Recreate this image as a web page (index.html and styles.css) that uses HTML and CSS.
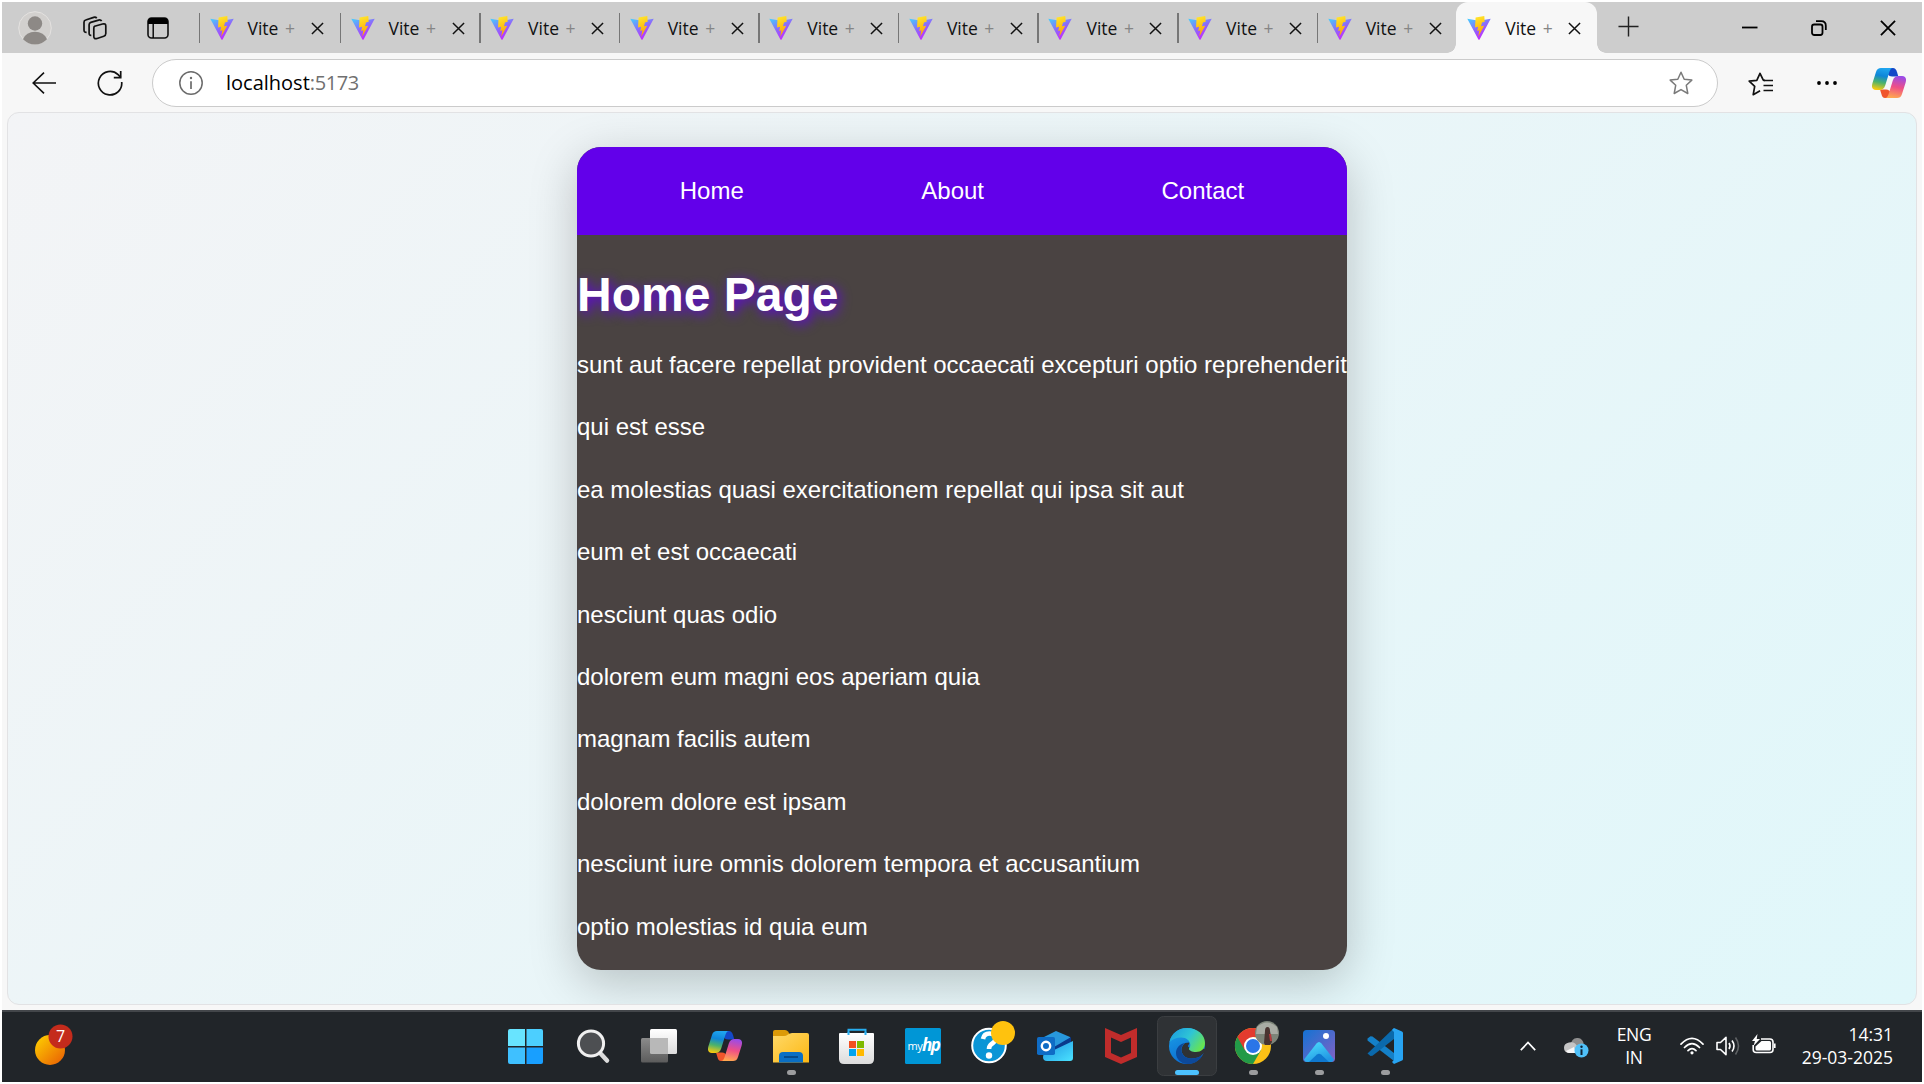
FILE: index.html
```html
<!DOCTYPE html>
<html lang="en">
<head>
<meta charset="utf-8">
<title>Vite + React</title>
<link rel="stylesheet" href="styles.css">
</head>
<body>
<svg class="defs" width="0" height="0" aria-hidden="true">
  <defs>
    <linearGradient id="vA" x1="0" y1="0" x2="0.6" y2="1"><stop offset="0" stop-color="#41d1ff"/><stop offset=".55" stop-color="#8f66fb"/><stop offset="1" stop-color="#c824ff"/></linearGradient>
    <linearGradient id="vB" x1="0.4" y1="0" x2="0.6" y2="1"><stop offset="0" stop-color="#ffe52b"/><stop offset="1" stop-color="#ff9d00"/></linearGradient>
    <linearGradient id="cpA" x1="0.5" y1="0" x2="0.3" y2="1"><stop offset="0" stop-color="#1fa5ef"/><stop offset=".35" stop-color="#0f86d8"/><stop offset=".65" stop-color="#4bb26c"/><stop offset="1" stop-color="#fdcb0c"/></linearGradient>
    <linearGradient id="cpB" x1="0.6" y1="0" x2="0.4" y2="1"><stop offset="0" stop-color="#9a4be8"/><stop offset=".5" stop-color="#ef4f86"/><stop offset="1" stop-color="#ffa850"/></linearGradient>
    <linearGradient id="fold" x1="0" y1="0" x2="1" y2="1"><stop offset="0" stop-color="#ffd968"/><stop offset="1" stop-color="#fdb813"/></linearGradient>
    <linearGradient id="silver" x1="0" y1="0" x2="0" y2="1"><stop offset="0" stop-color="#fff"/><stop offset="1" stop-color="#dcdcdc"/></linearGradient>
    <linearGradient id="gray" x1="0" y1="0" x2="0" y2="1"><stop offset="0" stop-color="#8b8b8b"/><stop offset="1" stop-color="#5c5c5c"/></linearGradient>
    <linearGradient id="sun" x1="0" y1="0" x2="1" y2="1"><stop offset="0" stop-color="#ffd500"/><stop offset="1" stop-color="#e85a04"/></linearGradient>
    <linearGradient id="edgeTop" x1="0" y1="0.2" x2="1" y2="0.7"><stop offset="0" stop-color="#1c9de0"/><stop offset=".5" stop-color="#2fc5d5"/><stop offset="1" stop-color="#6be648"/></linearGradient>
    <linearGradient id="edgeLeft" x1="0" y1="0" x2="0.5" y2="1"><stop offset="0" stop-color="#1ca1e8"/><stop offset="1" stop-color="#0a6ad0"/></linearGradient>
    <linearGradient id="photo" x1="0" y1="0" x2="1" y2="1"><stop offset="0" stop-color="#1373d3"/><stop offset="1" stop-color="#8561c5"/></linearGradient>
    <linearGradient id="mount" x1="0" y1="0" x2="0.6" y2="1"><stop offset="0" stop-color="#4fe2ff"/><stop offset="1" stop-color="#2196e3"/></linearGradient>
    <linearGradient id="outl" x1="0" y1="0" x2="1" y2="1"><stop offset="0" stop-color="#1c8fe0"/><stop offset="1" stop-color="#4be3ff"/></linearGradient>
    <symbol id="vite" viewBox="0 0 24 24"><path fill="url(#vA)" d="M.3 2.800 12 4.800l11.700-2L12.600 23.400c-.3.5-.9.5-1.200 0z"/><path fill="url(#vB)" d="M17.300.1 8.600 1.500 8 11.400l3.100-.7-.9 4.200 2.200-.6-1.200 6.400 6-11-3.200.6 1-3.900 2.700-.7z"/></symbol>
    <symbol id="x" viewBox="0 0 14 14"><path d="M1 1l12 12M13 1L1 13" fill="none" stroke="#111" stroke-width="1.600"/></symbol>
    <symbol id="copilot" viewBox="0 0 34 30">
      <path fill="#1448c8" d="M17 0h4c2 0 3 1.500 4 4l1.300 4.500h-6c-2.500 0-4-1-5.300-4z"/>
      <path fill="#f0562c" d="M17 30h-4c-2 0-3-1.500-3.600-4L8 21.500h6c2.500 0 4 1 4.500 4z"/>
      <path fill="url(#cpA)" d="M9 0h12c-2 0-3 2-3.800 4.500l-4 13C12 21 10 22 7.500 22H4c-4 0-4.700-3-3.500-7L4 4c1-3 2.500-4 5-4z"/>
      <path fill="url(#cpB)" d="M25 30H13c2 0 3-2 3.800-4.500l4-13C22 9 24 8 26.500 8H30c4 0 4.700 3 3.500 7L30 26c-1 3-2.500 4-5 4z"/>
    </symbol>
  </defs>
</svg>

<div class="screen">
  <header class="tabbar">
    <svg class="avatar" viewBox="0 0 34 34"><circle cx="17" cy="17" r="16.300" fill="#d2d0ce" stroke="#e4e2e0"/><circle cx="17" cy="12.500" r="7.200" fill="#8d8986"/><path d="M5 28.300a12.500 10.500 0 0 1 24 0 16.300 16.300 0 0 1-24 0z" fill="#8d8986"/></svg>
    <svg class="workspaces" viewBox="0 0 26 26" fill="none" stroke="#111" stroke-width="1.700"><path d="M12.600 11.300 20.500 9q3.300-.8 3.300 2v7.600q0 2-2 2.700l-6.700 2.200q-3.300.8-3.300-2v-8q0-1.700.8-2.200z"/><path d="M9.300 20.400q-2.200.2-2.200-2.200V9.700q0-1.700 1.700-2.300l7.800-2.300q2.200-.5 3 1.100"/><path d="M4.600 17.300Q2 17.400 2 15V7.300Q2 5.500 3.700 5l8-2.600q2-.6 3 .9"/></svg>
    <svg class="vtabs" viewBox="0 0 22 22"><rect x="1" y="1" width="20" height="20" rx="3.500" fill="none" stroke="#111" stroke-width="1.600"/><path d="M1 7V4.500Q1 1 4.500 1h13Q21 1 21 4.500V7zM5.500 7h1.400v14H5.500z" fill="#000"/></svg>
    <nav class="tabs">
      <div class="tab first"><svg class="fav"><use href="#vite"/></svg><span>Vite <i>+</i></span><svg class="close"><use href="#x"/></svg></div>
      <div class="tab"><svg class="fav"><use href="#vite"/></svg><span>Vite <i>+</i></span><svg class="close"><use href="#x"/></svg></div>
      <div class="tab"><svg class="fav"><use href="#vite"/></svg><span>Vite <i>+</i></span><svg class="close"><use href="#x"/></svg></div>
      <div class="tab"><svg class="fav"><use href="#vite"/></svg><span>Vite <i>+</i></span><svg class="close"><use href="#x"/></svg></div>
      <div class="tab"><svg class="fav"><use href="#vite"/></svg><span>Vite <i>+</i></span><svg class="close"><use href="#x"/></svg></div>
      <div class="tab"><svg class="fav"><use href="#vite"/></svg><span>Vite <i>+</i></span><svg class="close"><use href="#x"/></svg></div>
      <div class="tab"><svg class="fav"><use href="#vite"/></svg><span>Vite <i>+</i></span><svg class="close"><use href="#x"/></svg></div>
      <div class="tab"><svg class="fav"><use href="#vite"/></svg><span>Vite <i>+</i></span><svg class="close"><use href="#x"/></svg></div>
      <div class="tab"><svg class="fav"><use href="#vite"/></svg><span>Vite <i>+</i></span><svg class="close"><use href="#x"/></svg></div>
      <div class="tab active"><svg class="fav"><use href="#vite"/></svg><span>Vite <i>+</i></span><svg class="close"><use href="#x"/></svg></div>
    </nav>
    <svg class="newtab" viewBox="0 0 22 22"><path d="M11 .5v21M.5 11h21" stroke="#222" stroke-width="1.500"/></svg>
    <div class="controls">
      <svg width="16" height="16" viewBox="0 0 16 16"><path d="M0 7.500h15.500" stroke="#000" stroke-width="1.800"/></svg>
      <svg width="16" height="16" viewBox="0 0 16 16" fill="none" stroke="#000" stroke-width="1.800"><rect x="1" y="4.500" width="10.500" height="10.500" rx="2.200"/><path d="M5 1.200h5.200q4.600 0 4.600 4.600V10"/></svg>
      <svg width="16" height="16" viewBox="0 0 17 17"><path d="M1 1l15 15M16 1L1 16" stroke="#000" stroke-width="1.900"/></svg>
    </div>
  </header>

  <div class="toolbar">
    <svg class="back" viewBox="0 0 24 22" fill="none" stroke="#111" stroke-width="1.600"><path d="M24 11H1.200M12 .7 1.200 11 12 21.300"/></svg>
    <svg class="reload" viewBox="0 0 26 26" fill="none" stroke="#111" stroke-width="1.700"><path d="M24.700 12a11.700 11.700 0 1 1-3.600-7.300l2.600 2.700"/><path d="M23.700 1v6.700h-6.900"/></svg>
    <div class="omnibox">
      <svg class="info" viewBox="0 0 24 24"><circle cx="12" cy="12" r="11.200" fill="none" stroke="#6b6b6b" stroke-width="1.500"/><path d="M12 10.300V18" stroke="#6b6b6b" stroke-width="1.700"/><circle cx="12" cy="7" r="1.200" fill="#6b6b6b"/></svg>
      <span class="url">localhost<b>:5173</b></span>
      <svg class="star" viewBox="0 0 24 24" fill="none" stroke="#7a7a7a" stroke-width="1.500" stroke-linejoin="round"><path d="M12 1.200l3.200 7 7.600.9-5.500 5.200 1.500 8.200-6.800-3.900-6.800 3.900 1.500-8.200L1.200 9.100l7.600-.9z"/></svg>
    </div>
    <svg class="favs" viewBox="0 0 25 24" fill="none" stroke="#111" stroke-width="1.700" stroke-linejoin="round"><path d="M17 8.400l-1.700-.2L12 1.300l-3.200 7-7.600.9 5.500 5.200-1.500 8.300 6.900-4"/><path d="M15.500 8.500H25M15.500 13.500H25M15.500 18.500H25"/></svg>
    <svg class="dots" viewBox="0 0 20 6"><circle cx="2" cy="3" r="1.900"/><circle cx="10" cy="3" r="1.900"/><circle cx="18" cy="3" r="1.900"/></svg>
    <svg class="copilot"><use href="#copilot"/></svg>
  </div>

  <main class="browser-body">
    <div class="viewport">
      <section class="card">
        <ul class="menu"><li>Home</li><li>About</li><li>Contact</li></ul>
        <h1>Home Page</h1>
        <p>sunt aut facere repellat provident occaecati excepturi optio reprehenderit</p>
        <p>qui est esse</p>
        <p>ea molestias quasi exercitationem repellat qui ipsa sit aut</p>
        <p>eum et est occaecati</p>
        <p>nesciunt quas odio</p>
        <p>dolorem eum magni eos aperiam quia</p>
        <p>magnam facilis autem</p>
        <p>dolorem dolore est ipsam</p>
        <p>nesciunt iure omnis dolorem tempora et accusantium</p>
        <p>optio molestias id quia eum</p>
      </section>
    </div>
  </main>

  <footer class="taskbar">
    <svg class="widget" viewBox="0 0 38 42"><circle cx="15" cy="26" r="15" fill="url(#sun)"/><circle cx="25.500" cy="12.500" r="12" fill="#c42b1c"/><text x="25.500" y="18" class="badge">7</text></svg>
    <div class="apps">
      <svg viewBox="0 0 66 72"><path fill="#68e4ff" d="M16 19h15v17H14V21q0-2 2-2z"/><path fill="#4ccfff" d="M32.500 19H47q2 0 2 2v15H32.500z"/><path fill="#3fc0ff" d="M14 37.500h17V54H16q-2 0-2-2z"/><path fill="#189fff" d="M32.500 37.500H49V52q0 2-2 2H32.500z"/></svg>
      <svg viewBox="0 0 66 72"><path d="M41 44l6 6.500" stroke="#dcdcdc" stroke-width="4.500" stroke-linecap="round"/><circle cx="31" cy="33.500" r="12.600" fill="#4d4f52" stroke="#f0f0f0" stroke-width="3"/></svg>
      <svg viewBox="0 0 66 72"><rect x="24" y="19" width="27" height="25" rx="1.500" fill="url(#silver)"/><rect x="15" y="28" width="27" height="24.500" rx="1.500" fill="url(#gray)"/><path d="M24 28h18v16H25.500q-1.500 0-1.500-1.500z" fill="#b8b8b8"/></svg>
      <svg viewBox="0 0 66 72"><use href="#copilot" x="16" y="21" width="34" height="30"/></svg>
      <svg viewBox="0 0 66 72"><path d="M15 22q0-2 2-2h10q2 0 3 1.500l2 3L27 28H15z" fill="#dc9a07"/><path d="M15 26h11q2 0 4-1.500t4-1.500h15q2 0 2 2v27.500H15z" fill="url(#fold)"/><path d="M21 52.500V46q0-4 4-4h16q4 0 4 4v6.500z" fill="#0a6fc4"/><path d="M26 47h14" stroke="#043f78" stroke-width="1.500"/><rect x="29" y="60" width="9" height="5" rx="2.500" fill="#9c9d9f"/></svg>
      <svg viewBox="0 0 66 72"><path d="M24.500 25v-5.200h17V25" fill="none" stroke="#28aef0" stroke-width="2"/><path d="M15 24q0-1 1-1h33q1 0 1 1v25q0 5-5 5H20q-5 0-5-5z" fill="url(#silver)"/><path d="M24.500 25v-3M41.500 25v-3" stroke="#28aef0" stroke-width="2"/><path fill="#f25022" d="M25 31h7v7h-7z"/><path fill="#7fba00" d="M33 31h7v7h-7z"/><path fill="#00a4ef" d="M25 39h7v7h-7z"/><path fill="#ffb900" d="M33 39h7v7h-7z"/></svg>
      <svg viewBox="0 0 66 72"><rect x="15" y="18" width="36" height="36" rx="1.500" fill="#0096d6"/><text class="my" x="17.500" y="40">my</text><text class="hp" x="32" y="41">hp</text></svg>
      <svg viewBox="0 0 66 72"><circle cx="33" cy="35.500" r="16.800" fill="#0a95d6" stroke="#fff" stroke-width="2"/><path d="M27 29q1-5.500 6.500-5.500 6 0 6 5 0 3-3.500 5.200-3 2-3 5.300" fill="none" stroke="#fff" stroke-width="4.600"/><circle cx="33" cy="45.500" r="3.200" fill="#fff"/><circle cx="47" cy="23" r="12" fill="#ffc20e"/></svg>
      <svg viewBox="0 0 66 72"><path d="M22 27l12-6 14 6v12H22z" fill="#2898dc"/><path d="M32 37l17-10v7l-15 9z" fill="#0a3a8c"/><path d="M22 42l10-2 19-9v17q0 3-3 3H25q-4 0-4-4z" fill="url(#outl)"/><rect x="15" y="27" width="18" height="18" rx="1.800" fill="#0f6cc5"/><circle cx="24" cy="36" r="4.200" fill="none" stroke="#fff" stroke-width="2.400"/></svg>
      <svg viewBox="0 0 66 72"><path fill="#c02c2b" fill-rule="evenodd" d="M17 18l16 7 16-7v29l-16 7-16-7zM23 27.500V43l10 4.500L43 43V27.500L33 32z"/></svg>
      <svg viewBox="0 0 66 72"><rect x="3.500" y="6.500" width="59" height="59" rx="6" fill="#2f3235" stroke="#3b3e41"/><circle cx="33" cy="36" r="18" fill="url(#edgeLeft)"/><path d="M31 33c-2.500 2-4 5-3.500 8 1 5 5 7.500 10 7.500 4 0 7-1 9.500-2.800l4-3.700 3-4c-5 1.500-16 3-20-1.500 0-1.500 1.300-1.600 1.300-4z" fill="#2f3235"/><path d="M15.500 32C17 24 24 18 33 18c11 0 18 7 18 15 0 6-4 9-9 9-4 0-7-1.500-7-3 0-1 1.300-1.600 1.300-4 0-4-4-7.500-9-7.500-5 0-9 2-11.800 4.500z" fill="url(#edgeTop)"/><path d="M31 33c-3 2-4 5-3.500 8 .8 5 5 7.500 10 7.500 4 0 7-1 9.500-2.800.6-.4 1.200.2.8.8C44.500 51.500 39 54 34 54c-7 0-12-5-12-11 0-5 3.500-9 9-10z" fill="#0d499a"/><rect x="21" y="60" width="24" height="5" rx="2.500" fill="#4cc2ff"/></svg>
      <svg viewBox="0 0 66 72"><circle cx="33" cy="36" r="18" fill="#fbc116"/><path d="M17.400 27A18 18 0 0 0 33 54l7.800-13.500L33 36z" fill="#229a48"/><path d="M17.400 27A18 18 0 0 1 48.600 27H33L25 40.500z" fill="#e33b2e"/><circle cx="33" cy="36" r="9" fill="#fff"/><circle cx="33" cy="36" r="7" fill="#2a75e8"/><circle cx="47" cy="23" r="12" fill="#7d8579"/><path d="M37 17q10-9 20 0l1 7H36z" fill="#a9aca4"/><path d="M44 33l1-12q0-4 2.500-4t2.500 4l2 11-2 3h-5z" fill="#4a3430"/><path d="M49 24h2l1 7h-2z" fill="#b63a3d"/><rect x="29" y="60" width="9" height="5" rx="2.500" fill="#9c9d9f"/></svg>
      <svg viewBox="0 0 66 72"><rect x="17" y="20" width="32" height="32" rx="3.500" fill="url(#photo)"/><circle cx="40" cy="26" r="3" fill="#fff"/><path d="M18 49.500l12.500-16q2.500-3 5 0L48 49.500q-1 2.500-3 2.500H21q-2 0-3-2.500z" fill="url(#mount)"/><path d="M23 52l8-7.500q2-1.500 4 0l8 7.500z" fill="#0f78cf"/><rect x="29" y="60" width="9" height="5" rx="2.500" fill="#9c9d9f"/></svg>
      <svg viewBox="0 0 66 72"><path d="M15.500 28.500l3-2.300 2 .2L42 43v8L15.500 30.500z" fill="#1480c8"/><path d="M15.500 43.500L42 18v11L20.500 45.700l-2 .2-3-2.400z" fill="#0a69ac"/><path d="M42 18l8 3.500q1 .5 1 1.500v26q0 1-1 1.500L42 54l-2-2 2-2V22l-2-2z" fill="#28a4f2"/><rect x="29" y="60" width="9" height="5" rx="2.500" fill="#9c9d9f"/></svg>
    </div>
    <div class="tray">
      <svg class="chev" viewBox="0 0 16 10"><path d="M.8 9.200L8 1.500l7.200 7.700" fill="none" stroke="#fff" stroke-width="1.700"/></svg>
      <svg class="cloud" viewBox="0 0 25 21"><path d="M6 9Q8 0 14 1q5 .3 6 7l-6 6z" fill="#8f8f8f"/><path d="M5 5.500q6-1.500 9 5L10 16H5q-5-.5-5-5.300 0-4.200 5-5.200z" fill="#c5c5c5"/><path d="M2 14l8-4 2 6H5q-2 0-3-2z" fill="#f7f7f7"/><circle cx="17.500" cy="13.500" r="7" fill="#4fc0f8"/><path d="M17.500 12.300V18" stroke="#123" stroke-width="2"/><circle cx="17.500" cy="9.800" r="1.200" fill="#123"/></svg>
      <div class="lang">ENG<br>IN</div>
      <svg class="wifi" viewBox="0 0 24 18" fill="none" stroke="#fff" stroke-width="1.700" stroke-linecap="round"><path d="M1 7.200q11-11.500 22 0M4.500 10.500q7.500-7.500 15 0M8 13.600q4-4 8 0"/><circle cx="12" cy="15.800" r="1.600" fill="#fff" stroke="none"/></svg>
      <svg class="vol" viewBox="0 0 24 20" fill="none" stroke="#fff" stroke-width="1.600" stroke-linejoin="round"><path d="M1 6.500h3.500L10 1.300v17.400l-5.500-5.200H1z"/><path d="M13 7q2 3 0 6M16 4.500q4 5.500 0 11"/><path d="M19.500 1.500q6 8.500 0 17" stroke="#5f6265"/></svg>
      <svg class="bat" viewBox="0 0 24 20"><path d="M9 5h9q3 0 3 3v7.500q0 3-3 3H4.200q-3 0-3-3V11" fill="none" stroke="#fff" stroke-width="1.600"/><path d="M22 9.500h1.600v4.500H22z" fill="#fff"/><path d="M9.500 7h8q1.500 0 1.500 1.500v6.500q0 1.500-1.500 1.500H5q-1.500 0-1.500-1.500v-2.500z" fill="#fff"/><path d="M5.500 0L0 7h3L1.500 12 8 5H4.700z" fill="#fff"/></svg>
      <div class="clock">14:31<br>29-03-2025</div>
    </div>
  </footer>
</div>
</body>
</html>
```

FILE: styles.css
```css
* { box-sizing: border-box; }
body {
  margin: 0;
  background: #fff;
  font-family: "Open Sans", "Noto Sans", sans-serif;
}
svg { display: block; flex: none; }
.defs { position: absolute; }
.screen {
  display: flex;
  flex-direction: column;
  width: 1924px;
  height: 1084px;
  padding: 2px;
  overflow: hidden;
}

/* tab strip */
.tabbar {
  display: flex;
  align-items: center;
  height: 51px;
  background: #cdcdcd;
}
.avatar { width: 34px; height: 34px; margin-left: 16px; }
.workspaces { width: 26px; height: 26px; margin-left: 30px; }
.vtabs { width: 22px; height: 22px; margin-left: 39px; }
.tabs { display: flex; height: 51px; margin-left: 29.5px; }
.tab {
  position: relative;
  display: flex;
  align-items: center;
  width: 139.6px;
  padding: 1px 0 0 11px;
  font-size: 17.5px;
  color: #111;
}
.tab.first { width: 141px; }
.tab:not(.active)::before {
  content: "";
  position: absolute;
  left: 0;
  top: 11px;
  width: 1.5px;
  height: 30px;
  background: #767676;
}
.tab span { width: 63px; margin-left: 14px; white-space: nowrap; line-height: 24px; }
.tab i { font-style: normal; color: #858585; margin-left: 2px; }
.fav { width: 24px; height: 24px; }
.close { width: 13px; height: 13px; }
.tab.active { width: 141px; background: #f7f7f7; border-radius: 12px 12px 0 0; }
.tab.active::before, .tab.active::after {
  content: "";
  position: absolute;
  bottom: 0;
  width: 9px;
  height: 9px;
}
.tab.active::before { left: -9px; background: radial-gradient(circle at 0 0, #cdcdcd 8.5px, #f7f7f7 9px); }
.tab.active::after { right: -9px; background: radial-gradient(circle at 100% 0, #cdcdcd 8.5px, #f7f7f7 9px); }
.newtab { width: 21px; height: 21px; margin: -2px 0 0 21px; }
.controls { display: flex; align-items: center; gap: 53px; margin: 0 26px 0 auto; }

/* address row */
.toolbar {
  display: flex;
  align-items: center;
  height: 59px;
  background: #f7f7f7;
}
.back { width: 24px; height: 22px; margin-left: 30px; }
.reload { width: 26px; height: 26px; margin-left: 41px; }
.omnibox {
  display: flex;
  align-items: center;
  width: 1566px;
  height: 48px;
  margin-left: 29px;
  padding: 0 24px 0 26px;
  background: #fff;
  border: 1px solid #cbcbcb;
  border-radius: 24px;
}
.info { width: 24px; height: 24px; }
.url { margin-left: 23px; font-size: 20px; color: #000; }
.url b { font-weight: 400; color: #707070; letter-spacing: -0.4px; }
.star { width: 24px; height: 24px; margin-left: auto; }
.favs { width: 25px; height: 24px; margin: 2px 0 0 30px; }
.dots { width: 20px; height: 6px; margin: 1px 0 0 44px; }
.copilot { width: 34px; height: 30px; margin-left: 35px; }

/* page area */
.browser-body {
  flex: 1;
  padding: 0 5px;
  background: #f7f7f7;
}
.viewport {
  display: flex;
  justify-content: center;
  align-items: flex-start;
  height: 893px;
  padding-top: 34px;
  overflow: hidden;
  border: 1px solid #e2e2e4;
  border-radius: 12px;
  background: linear-gradient(135deg, #f3f4f6, #e0f7fa);
}
.card {
  width: 770px;
  height: 823px;
  background: #4a4342;
  border-radius: 24px;
  overflow: hidden;
  box-shadow: 0 12px 48px rgba(0, 0, 0, 0.22);
  color: #fff;
  font-family: "Liberation Sans", Arial, sans-serif;
  font-size: 24px;
  line-height: 38.4px;
}
.menu {
  display: flex;
  justify-content: space-around;
  align-items: center;
  height: 88px;
  margin: 0;
  padding: 0 14px;
  list-style: none;
  background: #6200ea;
}
.card h1 {
  margin: 33px 0 25px;
  font-size: 48px;
  line-height: 53px;
  text-shadow: 3px 3px 12px #6200ea;
}
.card p { margin: 0 0 24px; white-space: nowrap; }

/* taskbar */
.taskbar {
  display: flex;
  align-items: center;
  height: 72px;
  border-top: 2px solid #43464a;
  background: #212529;
  color: #fff;
}
.widget { width: 38px; height: 42px; margin: -4px 0 0 33px; }
.badge { fill: #fff; font-size: 16px; text-anchor: middle; }
.apps { display: flex; margin: -2px 0 0 421px; }
.apps svg { width: 66px; height: 72px; }
.my { fill: #fff; font-size: 11px; letter-spacing: -0.5px; }
.hp { fill: #fff; font-size: 17px; font-weight: 700; font-style: italic; letter-spacing: -1.5px; }
.tray { display: flex; align-items: center; margin: -2px 29px 0 auto; font-size: 17.5px; line-height: 23px; }
.chev { width: 16px; height: 10px; }
.cloud { width: 25px; height: 21px; margin: 3px 0 0 28px; }
.lang { width: 40px; margin-left: 25px; text-align: center; letter-spacing: -0.3px; }
.wifi { width: 24px; height: 18px; margin-left: 26px; }
.vol { width: 24px; height: 20px; margin-left: 12px; }
.bat { width: 24px; height: 20px; margin: -4px 0 0 12px; }
.clock { width: 117px; text-align: right; white-space: nowrap; }
```
